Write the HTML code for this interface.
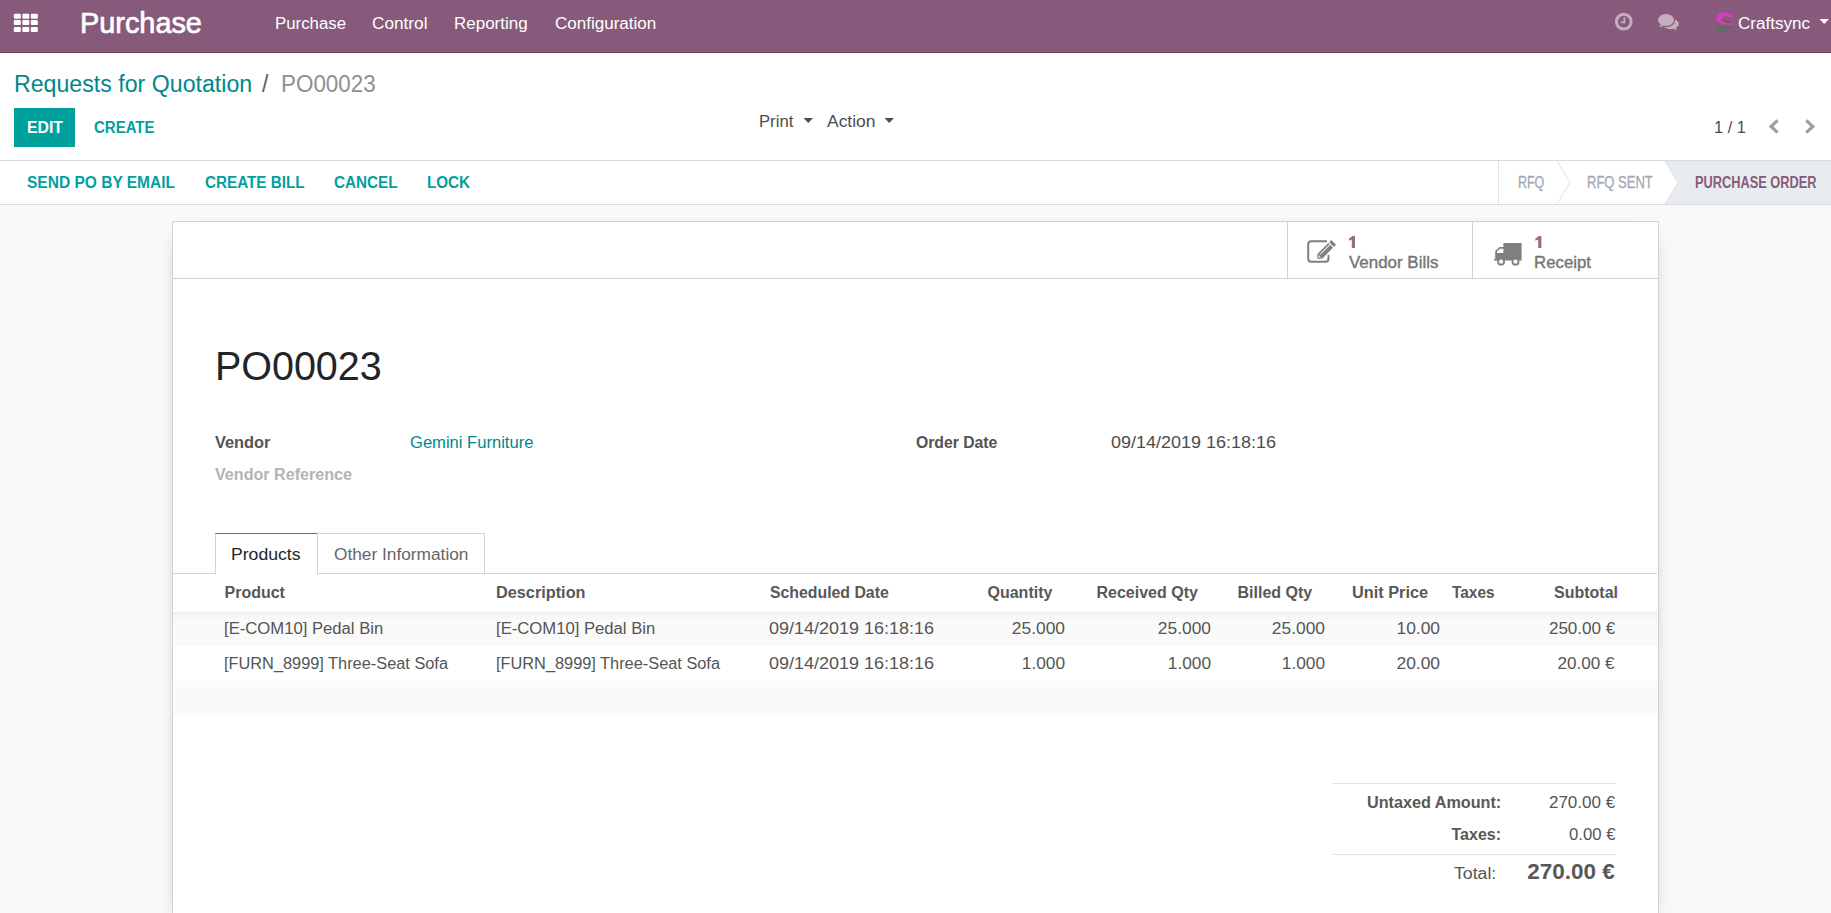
<!DOCTYPE html>
<html><head><meta charset="utf-8">
<style>
html,body{margin:0;padding:0;width:1831px;height:913px;overflow:hidden;background:#f9f9f9;font-family:"Liberation Sans",sans-serif;color:#555}
.t{position:absolute;white-space:pre;line-height:1;transform-origin:0 0}
.r{transform-origin:100% 0}
.b{font-weight:700}
.b:not([style*="color"]){color:#585858}
.abs{position:absolute}
</style></head><body>
<!-- NAVBAR -->
<div class="abs" style="left:0;top:0;width:1831px;height:52px;background:#875A7B;border-bottom:1px solid #6b4863"></div>
<svg class="abs" style="left:0;top:0" width="60" height="52">
 <g fill="#fff"><rect x="13.8" y="13.7" width="7" height="5" rx="1"/><rect x="22.3" y="13.7" width="7" height="5" rx="1"/><rect x="30.8" y="13.7" width="7" height="5" rx="1"/><rect x="13.8" y="20.1" width="7" height="5" rx="1"/><rect x="22.3" y="20.1" width="7" height="5" rx="1"/><rect x="30.8" y="20.1" width="7" height="5" rx="1"/><rect x="13.8" y="26.9" width="7" height="5" rx="1"/><rect x="22.3" y="26.9" width="7" height="5" rx="1"/><rect x="30.8" y="26.9" width="7" height="5" rx="1"/></g>
</svg>
<div class="t" style="left:79.5px;top:8.8px;font-size:29px;color:#fff;-webkit-text-stroke:0.7px #fff;transform:scaleX(0.995)">Purchase</div>
<div class="t" style="left:275px;top:15.9px;font-size:16px;color:#fff;transform:scaleX(1.05)">Purchase</div>
<div class="t" style="left:372px;top:15.9px;font-size:16px;color:#fff;transform:scaleX(1.075)">Control</div>
<div class="t" style="left:454px;top:15.9px;font-size:16px;color:#fff;transform:scaleX(1.062)">Reporting</div>
<div class="t" style="left:555px;top:15.9px;font-size:16px;color:#fff;transform:scaleX(1.064)">Configuration</div>
<!-- right icons -->
<svg class="abs" style="left:0;top:0" width="1831" height="52">
 <circle cx="1623.8" cy="21.6" r="7.4" fill="none" stroke="#c4aebe" stroke-width="3"/>
 <path d="M1624.4 17.2V22.3H1620.7" fill="none" stroke="#c4aebe" stroke-width="1.7"/>
 <ellipse cx="1670.5" cy="23.8" rx="8.3" ry="5.4" fill="#c4aebe"/>
 <polygon points="1672,27.5 1676.6,30.8 1675.6,26.5" fill="#c4aebe"/>
 <ellipse cx="1666" cy="20.1" rx="8" ry="6" fill="#c4aebe" stroke="#875A7B" stroke-width="2.4"/>
 <ellipse cx="1666" cy="20.1" rx="8" ry="6" fill="#c4aebe"/>
 <polygon points="1660.5,24.5 1659.2,27.6 1664,25.8" fill="#c4aebe"/>
 <ellipse cx="1722" cy="28.4" rx="8" ry="3.6" fill="#686868" transform="rotate(-14 1722 28.4)"/>
 <path d="M1722 19.6L1730 23" stroke="#5a5a5a" stroke-width="1.3"/>
 <path d="M1732.4 14.8C1727 10.8 1718.5 11.3 1716.5 16.5C1714.6 22 1719.5 25.2 1732 25L1731.8 23.6C1725 23 1720.5 21.3 1721.3 18.3C1722.3 15.8 1727.5 16 1732.4 17.5Z" fill="#d63cc0"/>
</svg>
<div class="t" style="left:1738px;top:15.9px;font-size:16px;color:#fff;transform:scaleX(1.065)">Craftsync</div>
<!-- CONTROL PANEL -->
<div class="abs" style="left:0;top:53px;width:1831px;height:107px;background:#fff;border-bottom:1px solid #d8dadd"></div>
<div class="t" style="left:14px;top:72.7px;font-size:23px;color:#00878a;transform:scaleX(1.007)">Requests for Quotation</div>
<div class="t" style="left:262px;top:72.7px;font-size:23px;color:#5a5a5a">/</div>
<div class="t" style="left:281px;top:72.7px;font-size:23px;color:#8f8f8f;transform:scaleX(0.975)">PO00023</div>
<div class="abs" style="left:14px;top:108px;width:61px;height:39px;background:#00A09D"></div>
<div class="t b" style="left:26.5px;top:119.7px;font-size:16px;color:#fff;transform:scaleX(0.988)">EDIT</div>
<div class="t b" style="left:93.5px;top:119.7px;font-size:16px;color:#00A09D;transform:scaleX(0.937)">CREATE</div>
<div class="t" style="left:759px;top:114.3px;font-size:16px;color:#4c4c4c;transform:scaleX(1.042)">Print</div>
<div class="t" style="left:827px;top:114.3px;font-size:16px;color:#4c4c4c;transform:scaleX(1.091)">Action</div>
<div class="t" style="left:1713.5px;top:119.5px;font-size:16px;color:#4c4c4c;transform:scaleX(1.023)">1 / 1</div>
<!-- STATUSBAR -->
<div class="abs" style="left:0;top:161px;width:1831px;height:43px;background:#fff;border-bottom:1px solid #d8dadd"></div>
<div class="t b" style="left:27px;top:174.5px;font-size:16px;color:#00A09D;transform:scaleX(0.97)">SEND PO BY EMAIL</div>
<div class="t b" style="left:205px;top:174.5px;font-size:16px;color:#00A09D;transform:scaleX(0.952)">CREATE BILL</div>
<div class="t b" style="left:334px;top:174.5px;font-size:16px;color:#00A09D;transform:scaleX(0.952)">CANCEL</div>
<div class="t b" style="left:427px;top:174.5px;font-size:16px;color:#00A09D;transform:scaleX(0.95)">LOCK</div>
<svg class="abs" style="left:0;top:0" width="1831" height="913">
 <!-- statusbar steps -->
 <polygon points="1665,161 1831,161 1831,204 1665,204 1678,182.5" fill="#e9ecef"/>
 <line x1="1498.5" y1="161" x2="1498.5" y2="204" stroke="#dee2e6"/>
 <polyline points="1557,161 1570,182.5 1557,204" fill="none" stroke="#dee2e6"/>
 <polyline points="1665,161 1678,182.5 1665,204" fill="none" stroke="#dee2e6"/>
 <!-- carets -->
 <polygon points="803.5,118 813,118 808.25,123" fill="#4c4c4c"/>
 <polygon points="884.5,118 894,118 889.25,123" fill="#4c4c4c"/>
 <polygon points="1819.5,19 1829,19 1824.25,24" fill="#fff"/>
 <!-- pager chevrons -->
 <polyline points="1777.6,120.3 1771,126.5 1777.6,132.7" fill="none" stroke="#9aa0a6" stroke-width="3.2"/>
 <polyline points="1806.2,120.3 1812.8,126.5 1806.2,132.7" fill="none" stroke="#9aa0a6" stroke-width="3.2"/>
</svg>
<div class="t" style="left:1517.5px;top:174.5px;font-size:15.8px;color:#a2a9b3;-webkit-text-stroke:0.3px #a2a9b3;transform:scaleX(0.785)">RFQ</div>
<div class="t" style="left:1586.5px;top:174.5px;font-size:15.8px;color:#a2a9b3;-webkit-text-stroke:0.3px #a2a9b3;transform:scaleX(0.824)">RFQ SENT</div>
<div class="t b" style="left:1695px;top:174.5px;font-size:15.8px;color:#875A7B;transform:scaleX(0.81)">PURCHASE ORDER</div>

<!-- SHEET -->
<div class="abs" style="left:172px;top:221px;width:1485px;height:700px;background:#fff;border:1px solid #ced4da;box-shadow:0 5px 20px -15px #000"></div>
<div class="abs" style="left:173px;top:278px;width:1485px;height:1px;background:#ced4da"></div>
<div class="abs" style="left:1287px;top:222px;width:1px;height:56px;background:#ced4da"></div>
<div class="abs" style="left:1472px;top:222px;width:1px;height:56px;background:#ced4da"></div>

<div class="t" style="left:1348.5px;top:254.5px;font-size:16px;color:#747474;-webkit-text-stroke:0.35px #747474;transform:scaleX(1.058)">Vendor Bills</div>
<svg class="abs" style="left:0;top:0" width="1831" height="300"><path d="M1351.8 248V239.6L1349 240.7V238.6L1352.6 236.1H1355V248Z" fill="#946c8b"/><path d="M1538.2 248V239.6L1535.4 240.7V238.6L1539 236.1H1541.4V248Z" fill="#946c8b"/></svg>
<div class="t" style="left:1534.2px;top:254.5px;font-size:16px;color:#747474;-webkit-text-stroke:0.35px #747474;transform:scaleX(1.051)">Receipt</div>

<div class="t" style="left:215px;top:346px;font-size:40px;color:#212529;transform:scaleX(0.986)">PO00023</div>

<div class="t b" style="left:215px;top:434.5px;font-size:16px;color:#535353;transform:scaleX(1.023)">Vendor</div>
<div class="t" style="left:410px;top:434.5px;font-size:16px;color:#00878a;transform:scaleX(1.036)">Gemini Furniture</div>
<div class="t b" style="left:215px;top:467.2px;font-size:16px;color:#b3b3b3;transform:scaleX(1.007)">Vendor Reference</div>
<div class="t b" style="left:916px;top:434.5px;font-size:16px;color:#535353;transform:scaleX(0.984)">Order Date</div>
<div class="t" style="left:1111px;top:434.5px;font-size:16px;color:#4c4c4c;transform:scaleX(1.124)">09/14/2019 16:18:16</div>

<!-- tabs -->
<div class="abs" style="left:173px;top:573px;width:1484px;height:1px;background:#ced4da"></div>
<div class="abs" style="left:215px;top:533px;width:101px;height:40px;background:#fff;border:1px solid #ced4da;border-top-color:#875A7B;border-bottom:1px solid #fff"></div>
<div class="abs" style="left:317px;top:533px;width:167px;height:39px;border:1px solid #ced4da;border-left:0"></div>
<div class="t" style="left:230.5px;top:546.7px;font-size:16px;color:#212529;transform:scaleX(1.1)">Products</div>
<div class="t" style="left:333.5px;top:546.9px;font-size:16px;color:#666;transform:scaleX(1.080)">Other Information</div>

<!-- table -->
<div class="abs" style="left:173px;top:612px;width:1484px;height:34px;background:linear-gradient(#ededed,#f6f6f6 4px,#fafafa 9px,#fafafa)"></div>
<div class="abs" style="left:173px;top:681px;width:1484px;height:35px;background:#fafafa"></div>
<div class="t b" style="left:224.5px;top:584.5px;font-size:16px">Product</div>
<div class="t b" style="left:496px;top:584.5px;font-size:16px;transform:scaleX(1.017)">Description</div>
<div class="t b" style="left:769.5px;top:584.5px;font-size:16px;transform:scaleX(0.989)">Scheduled Date</div>
<div class="t b" style="left:987.5px;top:584.5px;font-size:16px">Quantity</div>
<div class="t b" style="left:1096.5px;top:584.5px;font-size:16px">Received Qty</div>
<div class="t b" style="left:1237.5px;top:584.5px;font-size:16px">Billed Qty</div>
<div class="t b" style="left:1352px;top:584.5px;font-size:16px;transform:scaleX(1.019)">Unit Price</div>
<div class="t b" style="left:1452px;top:584.5px;font-size:16px;transform:scaleX(0.964)">Taxes</div>
<div class="t b" style="left:1554px;top:584.5px;font-size:16px">Subtotal</div>

<div class="t" style="left:223.5px;top:620.5px;font-size:16px;transform:scaleX(1.041)">[E-COM10] Pedal Bin</div>
<div class="t" style="left:495.5px;top:620.5px;font-size:16px;transform:scaleX(1.041)">[E-COM10] Pedal Bin</div>
<div class="t" style="left:768.5px;top:620.5px;font-size:16px;transform:scaleX(1.124)">09/14/2019 16:18:16</div>
<div class="t" style="left:223.5px;top:655.5px;font-size:16px;transform:scaleX(1.021)">[FURN_8999] Three-Seat Sofa</div>
<div class="t" style="left:495.5px;top:655.5px;font-size:16px;transform:scaleX(1.021)">[FURN_8999] Three-Seat Sofa</div>
<div class="t" style="left:768.5px;top:655.5px;font-size:16px;transform:scaleX(1.124)">09/14/2019 16:18:16</div>

<!-- totals -->
<div class="abs" style="left:1332px;top:783px;width:284px;height:1px;background:#dee2e6"></div>
<div class="abs" style="left:1332px;top:854px;width:284px;height:1px;background:#dee2e6"></div>
<div class="t b" style="left:1367px;top:794.8px;font-size:16px;transform:scaleX(1.011)">Untaxed Amount:</div>
<div class="t b" style="left:1451.5px;top:827.1px;font-size:16px">Taxes:</div>
<div class="t" style="left:1453.5px;top:865.6px;font-size:16px;transform:scaleX(1.105)">Total:</div>

<svg class="abs" style="left:0;top:0" width="1831" height="913">
 <path d="M1327 241.2H1311.2A3 3 0 0 0 1308.2 244.2V258.7A3 3 0 0 0 1311.2 261.7H1325.5A3 3 0 0 0 1328.5 258.7V255" fill="none" stroke="#7f7f7f" stroke-width="2"/>
 <g transform="translate(1317.4 258.75) rotate(-45)" fill="#7f7f7f">
  <polygon points="0,0 3.3,-3.3 3.3,3.3"/>
  <rect x="3.3" y="-3.3" width="15.5" height="6.6"/>
  <rect x="20" y="-3.3" width="3.1" height="6.6"/>
 </g>
 <g transform="translate(1317.4 258.75) rotate(-45)" fill="#fff">
  <polygon points="1.6,0 3.3,-1.4 3.3,1.4"/>
  <rect x="4.5" y="-1.6" width="14.3" height="0.8"/>
 </g>
 <path d="M1494 259H1495.2V251L1499.5 247H1503.4V243H1521.6V260.6H1494Z" fill="#7f7f7f"/>
 <polygon points="1497,253 1497,251.4 1500,248.7 1503.4,248.7 1503.4,253" fill="#fff"/>
 <circle cx="1501.1" cy="261.7" r="3.9" fill="#7f7f7f"/><circle cx="1501.1" cy="261.7" r="2.1" fill="#fff"/>
 <circle cx="1515.5" cy="261.7" r="3.9" fill="#7f7f7f"/><circle cx="1515.5" cy="261.7" r="2.1" fill="#fff"/>
</svg>
<div class="t r" style="right:765.8px;top:620.5px;font-size:16px;transform:scaleX(1.085)">25.000</div>
<div class="t r" style="right:620px;top:620.5px;font-size:16px;transform:scaleX(1.085)">25.000</div>
<div class="t r" style="right:505.8px;top:620.5px;font-size:16px;transform:scaleX(1.085)">25.000</div>
<div class="t r" style="right:390.5px;top:620.5px;font-size:16px;transform:scaleX(1.088)">10.00</div>
<div class="t r" style="right:216.2px;top:620.5px;font-size:16px;transform:scaleX(1.066)">250.00 €</div>
<div class="t r" style="right:765.8px;top:656px;font-size:16px;transform:scaleX(1.081)">1.000</div>
<div class="t r" style="right:620px;top:656px;font-size:16px;transform:scaleX(1.081)">1.000</div>
<div class="t r" style="right:505.8px;top:656px;font-size:16px;transform:scaleX(1.081)">1.000</div>
<div class="t r" style="right:390.5px;top:656px;font-size:16px;transform:scaleX(1.088)">20.00</div>
<div class="t r" style="right:216.5px;top:656px;font-size:16px;transform:scaleX(1.066)">20.00 €</div>
<div class="t r" style="right:216px;top:794.9px;font-size:16px;transform:scaleX(1.066)">270.00 €</div>
<div class="t r" style="right:216px;top:827.2px;font-size:16px;transform:scaleX(1.045)">0.00 €</div>
<div class="t r b" style="right:216px;top:861px;font-size:22px;transform:scaleX(1.021)">270.00 €</div>
</body></html>
